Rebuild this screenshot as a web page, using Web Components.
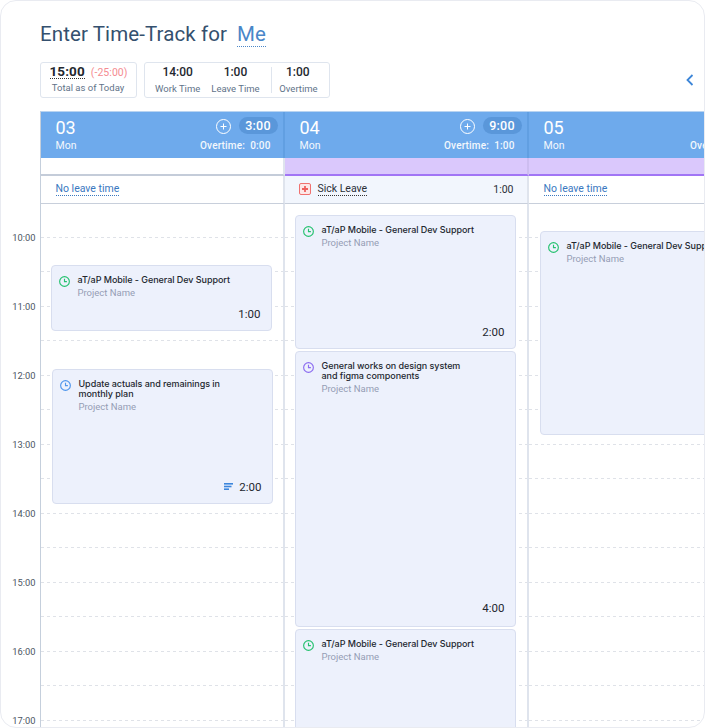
<!DOCTYPE html>
<html lang="en"><head><meta charset="utf-8"><title>Time-Track</title>
<style>
html,body{margin:0;padding:0;background:#fff;height:728px;overflow:hidden}
body{font-family:Roboto,"Liberation Sans",sans-serif}
</style></head><body>
<tt-app></tt-app>
<template id="card-t">
<style>
:host{display:block;box-sizing:border-box;width:221px;background:#edf1fc;border:1px solid #d8deef;border-radius:4px;position:relative;flex:none;padding:9px 10px 9px 7.5px;font-family:Inter,Roboto,sans-serif}
.wrap{display:flex;flex-direction:column;height:100%}
.top{display:flex;gap:7.5px}
.ic{width:11px;height:11px;margin-top:1px;flex:none;display:block}
.txt{min-width:0}
.t{font-size:9px;line-height:10.5px;font-weight:500;color:#23272f;white-space:pre-line;width:195px;letter-spacing:-.05px}
.p{font:9.5px/12px Roboto,sans-serif;color:#959db5;margin-top:1.5px}
.b{margin-top:auto;margin-bottom:var(--raise,0);display:flex;justify-content:flex-end;align-items:center;gap:6px;font:400 11.5px/14px Roboto,sans-serif;color:#23272f}
.b svg{display:none}
:host([note]) .b svg{display:block}
</style>
<div class="wrap"><div class="top">
<svg class="ic" viewBox="0 0 12 12" fill="none" stroke-width="1.25"><circle cx="6" cy="6" r="5.3"/><path d="M6 3v3.2h2.6"/></svg>
<div class="txt"><div class="t"></div><div class="p">Project Name</div></div></div>
<div class="b"><svg width="9" height="7" viewBox="0 0 9 7" fill="#3d86dc"><rect width="9" height="1.6"/><rect y="2.7" width="7.5" height="1.6"/><rect y="5.4" width="5" height="1.6"/></svg><span class="d"></span></div></div>
</template>
<template id="day-t">
<style>
:host{display:flex;flex-direction:column;flex:none;box-sizing:border-box;height:100%;position:relative}
.hd{box-sizing:border-box;height:46px;background:#6eaaec;color:#fff;display:flex;justify-content:space-between;padding:5px 5px 0 15px;border-right:2px solid #619fe2}
:host([last]) .hd{border-right:0}
.num{font:400 18px/21px Roboto,sans-serif}
.dn{font:400 10.5px/13px Roboto,sans-serif;margin-top:1.5px;opacity:.92}
.r{display:flex;flex-direction:column;align-items:flex-end;flex:none}
.tr{display:flex;align-items:center;gap:8px}
.tr svg{margin-top:2px}
.pill{width:39px;height:17px;border-radius:9px;background:#5a97da;font:500 12.5px/17px Roboto,sans-serif;text-align:center;letter-spacing:.2px}
.ot{font:500 10px/13px Roboto,sans-serif;margin:5.5px 7px 0 0;white-space:pre;opacity:.92;letter-spacing:.15px}
.strip{box-sizing:border-box;height:18px;background:#fff;border-bottom:2px solid #c4ccd9;border-right:2px solid #dfe4ed}
:host([leave]) .strip,:host([tint]) .strip{background:#dac8fc;border-bottom-color:#a175f5;border-right-color:#cdbdf0}
:host([last]) .strip{border-right:0}
.lv{box-sizing:border-box;height:28px;border-bottom:1px solid #c8cfdb;border-right:2px solid #dfe4ed;display:flex;align-items:center;padding:0 15px;font:10.5px/13px Roboto,sans-serif}
:host([last]) .lv{border-right:0}
:host([leave]) .lv{background:#f2f6fd;padding:0 13px 0 14px}
.none{color:#3a78bf;border-bottom:1px dotted #3a78bf;line-height:11px;padding-bottom:1px;white-space:nowrap}
.sick{display:none;align-items:center;flex:1;color:#2a2f38}
:host([leave]) .sick{display:flex}
:host([leave]) .none{display:none}
.sq{width:12px;height:12px;box-sizing:border-box;border:1px solid #f0716f;border-radius:2px;background:#fde7e7;margin-right:7px;display:block}
.sl{border-bottom:1px dotted #333;line-height:11px;padding-bottom:1px}
.h{margin-left:auto;font-size:10.5px}
.body{flex:1;display:grid;min-height:0;overflow:hidden;border-right:2px solid #dfe4ed}
:host([last]) .body{border-right:0}
.lines,.cards{grid-area:1/1;min-width:0;display:flex;flex-direction:column}
.lines{padding-top:33px}
.lines i{display:block;height:34.5px;flex:none;background:repeating-linear-gradient(90deg,#dfe2e8 0 3px,transparent 3px 6px) top left/100% 1px no-repeat}
.cards{padding-left:10px}
:host([last]) .cards{padding-left:11px}
</style>
<div class="hd"><div><div class="num"></div><div class="dn">Mon</div></div>
<div class="r"><div class="tr"><svg width="15" height="15" viewBox="0 0 15 15" fill="none" stroke="#fff" stroke-width="1"><circle cx="7.5" cy="7.5" r="7"/><path d="M7.5 4.5v6M4.5 7.5h6"/></svg><div class="pill"></div></div><div class="ot"></div></div></div>
<div class="strip"></div>
<div class="lv"><span class="none">No leave time</span><span class="sick"><svg class="sq" viewBox="0 0 10 10"><path d="M5 2v6M2 5h6" stroke="#ee5f5d" stroke-width="1.8"/></svg><span class="sl">Sick Leave</span><span class="h">1:00</span></span></div>
<div class="body"><div class="lines"></div><div class="cards"><slot></slot></div></div>
</template>
<script>
class TTCard extends HTMLElement{
  constructor(){super();this.attachShadow({mode:'open'}).append(document.getElementById('card-t').content.cloneNode(true));}
  connectedCallback(){
    const s=this.shadowRoot;
    s.querySelector('.t').textContent=this.getAttribute('title-text')||'';
    s.querySelector('.d').textContent=this.getAttribute('dur')||'';
    s.querySelector('.ic').setAttribute('stroke',this.getAttribute('color')||'#25c16f');
  }
}
customElements.define('tt-card',TTCard);
class TTDay extends HTMLElement{
  constructor(){super();this.attachShadow({mode:'open'}).append(document.getElementById('day-t').content.cloneNode(true));}
  connectedCallback(){
    const s=this.shadowRoot;
    s.querySelector('.num').textContent=this.getAttribute('num');
    s.querySelector('.pill').textContent=this.getAttribute('total');
    s.querySelector('.ot').textContent='Overtime:  '+this.getAttribute('over');
    const l=s.querySelector('.lines');
    for(let i=0;i<15;i++)l.append(document.createElement('i'));
  }
}
customElements.define('tt-day',TTDay);
class TTStat extends HTMLElement{
  constructor(){super();this.attachShadow({mode:'open'}).innerHTML=`<style>
  :host{display:flex;flex-direction:column;align-items:center;flex:none;color:#5f7389}
  :host([end]){align-items:flex-end}
  .v{font:500 12px/15px Roboto,sans-serif;color:#24282f}
  :host([end]) .v{margin-right:8px}
  .l{font:9.5px/13px Roboto,sans-serif;margin-top:2px;white-space:nowrap}
  </style><div class="v"></div><div class="l"></div>`;}
  connectedCallback(){
    this.shadowRoot.querySelector('.v').textContent=this.getAttribute('value');
    this.shadowRoot.querySelector('.l').textContent=this.getAttribute('label');
  }
}
customElements.define('tt-stat',TTStat);
class TTApp extends HTMLElement{
  constructor(){super();this.attachShadow({mode:'open'}).innerHTML=`<style>
  :host{display:block;box-sizing:border-box;height:728px;width:705px;border:1.5px solid #e9ebf1;border-radius:16px;overflow:hidden;background:#fff;position:relative}
  .head{padding:20px 0 0 38.5px;height:109.5px;box-sizing:border-box;position:relative}
  h1{margin:0 0 0 .5px;font:400 20.5px/26px Roboto,sans-serif;color:#34506e;letter-spacing:.1px;display:flex}
  h1 span{margin-left:10px;color:#4a86c8;position:relative;height:25px;border-bottom:1px dotted #4a86c8}
  .stats{display:flex;gap:7px;margin-top:14.5px;align-items:stretch}
  .box{box-sizing:border-box;height:36px;border:1.5px solid #dfe5ee;border-radius:3px;display:flex;align-items:center}
  .b1{width:97px;flex-direction:column;padding-top:1px}
  .b1 .top{display:flex;align-items:baseline;gap:6px;margin-left:1px;line-height:15px}
  .big{font:700 13.5px/14px Roboto,sans-serif;color:#24282f;border-bottom:1px dotted #333;letter-spacing:.1px}
  .neg{font:10.5px/14px Roboto,sans-serif;color:#f58b92;letter-spacing:.05px}
  .tot{font:9.5px/13px Roboto,sans-serif;color:#5f7389;margin-top:1px}
  .b2{width:186px;padding-left:10.5px}
  .b2 tt-stat:nth-child(2){margin-left:11px}
  .sep{width:1px;height:26px;background:#dfe5ee;margin:0 0 0 11px;flex:none}
  .ovr{width:46px;overflow:hidden}
  .chev{position:absolute;right:10px;top:73px}
  .grid{display:flex;height:617px;box-sizing:border-box}
  .gut{width:38.5px;flex:none;padding-top:92.5px;box-sizing:border-box;text-align:right}
  .gut div{height:69px;font:9.3px/69px Roboto,sans-serif;color:#4c5563;padding-right:4px}
  .col{flex:1;display:flex;min-width:0;overflow:hidden;border-left:1px solid #c5cfdc;border-top:1px solid #b9d4f1}
  </style>
  <div class="head"><h1>Enter Time-Track for <span>Me</span></h1>
  <div class="stats">
    <div class="box b1"><div class="top"><span class="big">15:00</span><span class="neg">(-25:00)</span></div><div class="tot">Total as of Today</div></div>
    <div class="box b2"><tt-stat value="14:00" label="Work Time"></tt-stat><tt-stat value="1:00" label="Leave Time"></tt-stat><div class="sep"></div><tt-stat class="ovr" end value="1:00" label="Overtime"></tt-stat></div>
  </div>
  <svg class="chev" width="8" height="12" viewBox="0 0 8 12" fill="none" stroke="#3d86d8" stroke-width="1.8"><path d="M6.5 1 1.5 6l5 5"/></svg>
  </div>
  <div class="grid">
  <div class="gut">${[10,11,12,13,14,15,16,17].map(h=>`<div>${h}:00</div>`).join('')}</div>
  <div class="col"><slot></slot></div>
  </div>`;}
  connectedCallback(){
    this.innerHTML=`
    <tt-day num="03" total="3:00" over="0:00" style="width:244px">
      <tt-card style="margin-top:61px;height:66px" color="#25c16f" title-text="aT/aP Mobile - General Dev Support" dur="1:00"></tt-card>
      <tt-card style="margin:38px 0 0 1px;height:135px" color="#4f96ec" note title-text="Update actuals and remainings in&#10;monthly plan" dur="2:00"></tt-card>
    </tt-day>
    <tt-day num="04" total="9:00" over="1:00" leave style="width:244px">
      <tt-card style="margin-top:11px;height:134px" color="#25c16f" title-text="aT/aP Mobile - General Dev Support" dur="2:00"></tt-card>
      <tt-card style="margin-top:2px;height:276px;--raise:2px" color="#8c6cf0" title-text="General works on design system&#10;and figma components" dur="4:00"></tt-card>
      <tt-card style="margin-top:2px;height:120px" color="#25c16f" title-text="aT/aP Mobile - General Dev Support"></tt-card>
    </tt-day>
    <tt-day num="05" total="" over="0:00" tint last style="width:244px">
      <tt-card style="margin-top:27px;height:204px" color="#25c16f" title-text="aT/aP Mobile - General Dev Support"></tt-card>
    </tt-day>`;
  }
}
customElements.define('tt-app',TTApp);
</script>
</body></html>
